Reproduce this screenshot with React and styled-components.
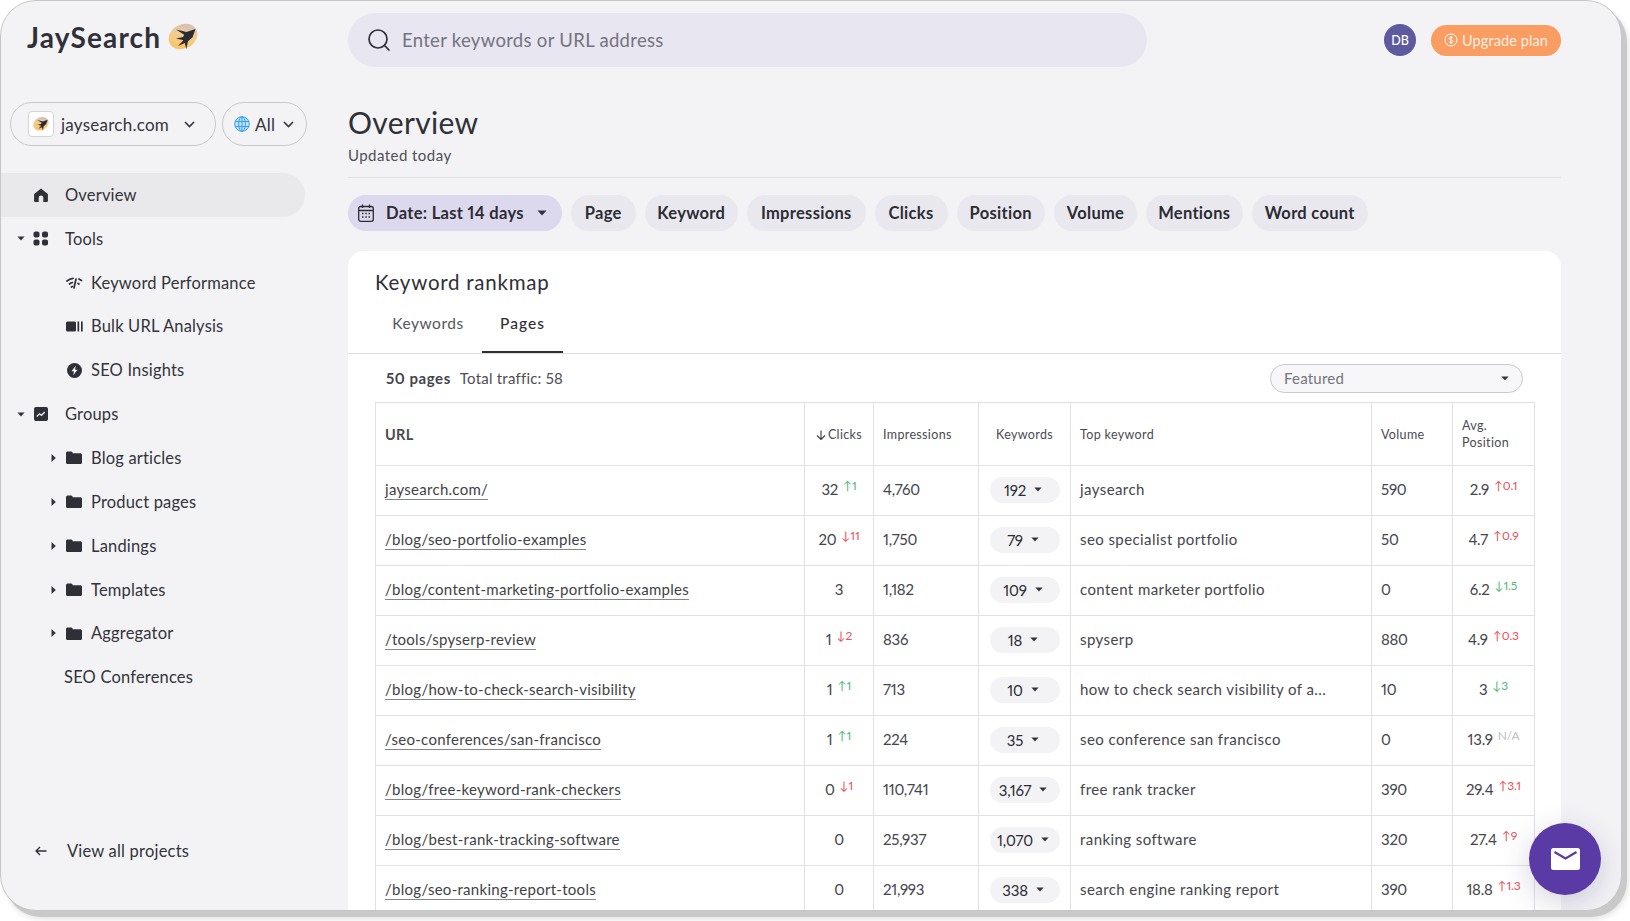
import React from "react";
import styled, { createGlobalStyle } from "styled-components";

const Global = createGlobalStyle`
  html, body { margin: 0; padding: 0; background: #fff; height: 100%; overflow: hidden; }
  body { font-family: "Lato", "Liberation Sans", sans-serif; color: #2f2f37; font-variant-numeric: proportional-nums; }
  * { box-sizing: border-box; }
`;

const Shell = styled.div`
  position: relative; width: 1622px; height: 911px; margin: 0;
  border: 1.5px solid #c6c6c8; border-radius: 36px; background: #f3f3f6;
  box-shadow: 5px 6px 0 #c9c9c9, 6px 8px 6px rgba(0,0,0,.12);
  display: grid; grid-template-columns: 347px 1fr; overflow: hidden;
`;
const Sidebar = styled.aside`display: flex; flex-direction: column; padding-top: 21px; min-height: 0;`;
const Logo = styled.div`display: flex; align-items: center; gap: 7px; padding-left: 26px; height: 30px;
  font-size: 28px; font-weight: 700; letter-spacing: 1.15px; color: #303038;`;
const SiteRow = styled.div`display: flex; gap: 6px; padding: 50px 0 0 9px; margin-bottom: 27px;`;
const SitePill = styled.div`height: 44px; width: ${p => p.$w}px; border: 1px solid #c9c9cc; border-radius: 22px;
  display: flex; align-items: center; padding-left: ${p => p.$pl}px; font-size: 17px; letter-spacing: .25px; color: #34343c;`;
const SiteIcon = styled.span`width: 26px; height: 26px; border: 1px solid #d4d4d8; border-radius: 4px; background: #fff;
  display: flex; align-items: center; justify-content: center; margin-right: 7px;`;
const ChevSlot = styled.span`display: flex; margin: 0 0 0 ${p => p.$ml}px;`;
const AllLabel = styled.span`margin: 0 0 0 5px;`;
const Nav = styled.nav`display: flex; flex-direction: column;`;
const NavRow = styled.div`height: 43.85px; width: 304px; display: flex; align-items: center; padding-left: ${p => p.$pl}px;
  font-size: 16.5px; letter-spacing: .18px; color: #33333b;
  ${p => p.$active && "background: #e9e9ec; border-radius: 0 22px 22px 0;"}`;
const Caret = styled.span`width: 12px; height: 12px; flex: none; display: flex; align-items: center; justify-content: center;`;
const NavIcon = styled.span`flex: none; width: 18px; margin-left: ${p => p.$ml}px; margin-right: ${p => p.$mr}px; display: flex; align-items: center; justify-content: center;`;
const Footer = styled.div`margin-top: auto; height: 44px; margin-bottom: 37px; display: flex; align-items: center; padding-left: 34px; gap: 20px;
  font-size: 16.5px; letter-spacing: .2px; color: #33333b;`;

const Main = styled.main`min-width: 0; padding: 12px 60px 0 0; display: flex; flex-direction: column; min-height: 0;`;
const TopBar = styled.div`display: flex; align-items: center; height: 54px; flex: none;`;
const Search = styled.div`width: 799px; height: 54px; border-radius: 27px; background: #e8e6f0; display: flex; align-items: center; padding-left: 18px; gap: 10px;
  font-size: 18.5px; letter-spacing: .3px; color: #74747e;`;
const Avatar = styled.div`margin-left: auto; width: 32px; height: 32px; border-radius: 50%; background: #5d5a9f; color: #fff; font-size: 12.5px; font-weight: 500;
  display: flex; align-items: center; justify-content: center; margin-right: 15px;`;
const Upgrade = styled.div`width: 130px; height: 31px; border-radius: 16px; background: #f99d63; color: #ffefe4; font-size: 14.5px; font-weight: 400; letter-spacing: .1px;
  display: flex; align-items: center; justify-content: center; gap: 4px;`;
const Heading = styled.h1`margin: 37px 0 0; font-size: 30px; font-weight: 400; letter-spacing: .35px; line-height: 36px; color: #303038;`;
const Sub = styled.div`margin-top: 5px; font-size: 15px; letter-spacing: .45px; line-height: 20px; color: #4e4e56; padding-bottom: 12px; border-bottom: 1px solid #e0e0e3;`;
const Chips = styled.div`display: flex; gap: 9px; margin: 17px 0 20px; flex: none;`;
const Chip = styled.div`height: 36px; width: ${p => p.$w}px; border-radius: 18px; background: #e9e8ef; display: flex; align-items: center; justify-content: center;
  font-size: 16.5px; font-weight: 700; letter-spacing: .3px; color: #2c2c34;`;
const DateChip = styled(Chip)`background: #dcd8ee; justify-content: flex-start; padding: 0 10px; gap: 12px; letter-spacing: .32px;`;
const ChipCaret = styled.span`display: flex; margin-left: auto; margin-right: 5px;`;
const Card = styled.section`flex: 1; min-height: 0; background: #fff; border-radius: 16px 16px 0 0; overflow: hidden;`;
const CardTitle = styled.h2`margin: 0; padding: 17px 0 0 27px; font-size: 20.5px; font-weight: 400; letter-spacing: .75px; line-height: 28px; color: #303038;`;
const Tabs = styled.div`display: flex; height: 51px; margin-top: 7px; padding-left: 36px; border-bottom: 1.5px solid #dedee0;`;
const Tab = styled.div`width: ${p => p.$w}px; margin-right: ${p => p.$mr}px; height: 50px; padding-top: 8px; display: flex; justify-content: center; font-size: 15.5px; letter-spacing: ${p => p.$on ? "1px" : ".55px"}; line-height: 24px;
  color: ${p => p.$on ? "#2f2f37" : "#55555d"}; ${p => p.$on && "font-weight: 500; border-bottom: 2px solid #2f2f37;"}`;
const Summary = styled.div`height: 48px; display: flex; align-items: center; padding: 0 38px 0 38px; font-size: 15px; letter-spacing: .22px; color: #4e4e56; gap: 9px;`;
const Bold = styled.b`font-weight: 700; color: #44444c; letter-spacing: .55px;`;
const Select = styled.div`margin-left: auto; width: 253px; height: 29px; border: 1px solid #c9c9cc; border-radius: 15px; background: #f7f7f9; display: flex; align-items: center; padding: 0 13px; justify-content: space-between; color: #74747c;`;
const Table = styled.table`margin-left: 27px; width: 1159px; table-layout: fixed; border-collapse: collapse; font-size: 15px; letter-spacing: .42px; color: #45454d;`;
const Th = styled.th`border: 1.5px solid #e1e1e3; height: 63px; padding: 0 ${p => p.$c ? 0 : 9}px; font-size: 12.5px; font-weight: 400; letter-spacing: .35px; text-align: ${p => p.$c ? "center" : "left"}; color: #4a4a52; line-height: 17px;
  ${p => p.$strong && "font-size: 14.5px; font-weight: 700;"}`;
const Td = styled.td`border: 1.5px solid #e1e1e3; height: 50px; padding: 0 ${p => p.$c ? 0 : 9}px 3px; text-align: ${p => p.$c ? "center" : "left"}; white-space: nowrap; overflow: hidden;
  ${p => p.$num && "letter-spacing: -.25px;"}`;
const UrlLink = styled.a`color: #3f3f47; border-bottom: 1px solid #85858c; padding-bottom: 1px; letter-spacing: .28px;`;
const Delta = styled.sup`font-size: 12px; line-height: 0; margin-left: 5px; vertical-align: 5px; letter-spacing: -.1px; color: ${p => p.$c};`;
const KwChip = styled.span`display: inline-flex; align-items: center; justify-content: center; gap: 8px; width: 70px; height: 26px; padding-right: 3px; margin-top: 1px; border-radius: 13px; background: #f3f3f5; color: #2c2c34; letter-spacing: -.2px;`;
const Fab = styled.div`position: absolute; left: 1528px; top: 822px; width: 72px; height: 72px; border-radius: 50%; background: #5a3ba5;
  display: flex; align-items: center; justify-content: center; box-shadow: 0 8px 30px rgba(50,40,90,.2);`;

const Down = ({ s = 8, c = "#33333b" }) => <svg width={s} height={s * .6} viewBox="0 0 10 6"><path d="M0.5 0.5h9L5 5.5z" fill={c} /></svg>;
const Right = () => <svg width="5" height="8" viewBox="0 0 5 8"><path d="M.5 0v8L4.8 4z" fill="#33333b" /></svg>;
const Chev = () => <svg width="11" height="7" viewBox="0 0 11 7"><path d="M1 1l4.5 4.5L10 1" fill="none" stroke="#33333b" strokeWidth="1.6" /></svg>;
const Bird = ({ s = 30, id }) => (
  <svg width={s} height={s} viewBox="0 0 30 30">
    <defs><linearGradient id={id} x1="0" y1="1" x2="1" y2="0"><stop offset="0" stopColor="#fcc04f" /><stop offset=".55" stopColor="#f2cd92" /><stop offset="1" stopColor="#c4b8cf" /></linearGradient></defs>
    <ellipse cx="15" cy="14.500" rx="15" ry="12" transform="rotate(-28 15 14.500)" fill={`url(#${id})`} />
    <path d="M8 7.500l10.500 2.600L27.500 7l-3 8.500-4.500 3.700-1.700 7.800-1.500-6-6.800 3 5.400-5.700L8 16.500l7-1.400 1.200-2.300z" fill="#2b2b33" />
  </svg>
);
const Home = () => <svg width="16" height="16" viewBox="0 0 16 16"><path d="M8 1.500l6.500 5.200a1 1 0 0 1 .4.8V14a1 1 0 0 1-1 1H10.300v-4.200a2.300 2.300 0 0 0-4.600 0V15H2.100a1 1 0 0 1-1-1V7.500a1 1 0 0 1 .4-.8z" fill="#2f2f37" /></svg>;
const Grid4 = () => <svg width="16" height="15" viewBox="0 0 16 15" fill="#2f2f37"><rect x="0.500" y="0.500" width="6" height="6" rx="2" /><rect x="9" y="0.500" width="6" height="6" rx="2" /><rect x="0.500" y="8.500" width="6" height="6" rx="2" /><rect x="9" y="8.500" width="6" height="6" rx="2" /></svg>;
const Perf = () => <svg width="17" height="12" viewBox="0 0 17 12" fill="none" stroke="#2f2f37" strokeLinecap="round"><path strokeWidth="1.700" d="M1 4c1.800-1.500 3.800-2.300 6-2.600M3.500 7c1-.9 2-1.300 3-1.500M5.500 10l.8-.6M8 11l2-9" /><path strokeWidth="1.700" d="M13 2l2.500 1.500M12 6.500l1 .6" /></svg>;
const Bulk = () => <svg width="17" height="11" viewBox="0 0 17 11" fill="#2f2f37"><rect width="10" height="10" y=".5" rx="1.500" /><rect x="11.500" y=".5" width="1.700" height="10" /><rect x="15" y=".5" width="1.700" height="10" /></svg>;
const BoltC = () => <svg width="15" height="15" viewBox="0 0 15 15"><circle cx="7.500" cy="7.500" r="7.500" fill="#2f2f37" /><path d="M8.800 2.800L4.500 8.300h2.500L6.200 12.200l4.300-5.500H8z" fill="#f3f3f6" /></svg>;
const Chart = () => <svg width="14" height="14" viewBox="0 0 14 14"><rect width="14" height="14" rx="2" fill="#2f2f37" /><path d="M2.800 9.500l2.700-2.700 2 1.500 3.200-3.300" stroke="#f3f3f6" strokeWidth="1.300" fill="none" /></svg>;
const Folder = () => <svg width="16" height="13" viewBox="0 0 16 13"><path d="M0 2a1.500 1.500 0 0 1 1.500-1.500h4L7.200 2.300h7.300A1.500 1.500 0 0 1 16 3.800v7.700A1.500 1.500 0 0 1 14.500 13h-13A1.500 1.500 0 0 1 0 11.500z" fill="#2f2f37" /></svg>;
const Globe = () => <svg width="16" height="16" viewBox="0 0 16 16" fill="none" stroke="#3aa0e8" strokeWidth="1"><circle cx="8" cy="8" r="7.300" fill="#bfe2fa" /><ellipse cx="8" cy="8" rx="3.400" ry="7.300" /><path d="M1 5.500h14M1 10.500h14M8 .7v14.600" /></svg>;
const SearchI = () => <svg width="26" height="26" viewBox="0 0 26 26" fill="none" stroke="#2f2f37" strokeWidth="1.700" strokeLinecap="round"><circle cx="12" cy="12" r="9" /><path d="M18.500 18.500l4.500 4.500" /></svg>;
const Cal = () => <svg width="16" height="18" viewBox="0 0 16 18" fill="none" stroke="#2c2c34" strokeWidth="1.300"><rect x=".7" y="2.500" width="14.600" height="14.800" rx="2" /><path d="M.7 6.500h14.600M4.500.5v3.500M11.500.5v3.500" /><path d="M4 9.500h1.500M7.300 9.500h1.500M10.500 9.500H12M4 13h1.500M7.300 13h1.500M10.500 13H12" strokeWidth="1.400" /></svg>;
const Coin = () => <svg width="14" height="14" viewBox="0 0 14 14" fill="none" stroke="#fff" strokeWidth="1"><circle cx="7" cy="7" r="6" /><path d="M9 5.200C8.600 4.500 7.800 4.200 7 4.200c-1.100 0-2 .6-2 1.400 0 1.900 4 .9 4 2.800 0 .8-.9 1.400-2 1.400-.9 0-1.700-.4-2.100-1.100M7 3.200v7.600" /></svg>;
const Back = () => <svg width="12" height="10" viewBox="0 0 12 10" fill="none" stroke="#2f2f37" strokeWidth="1.300"><path d="M11.500 5H1M5 1L1 5l4 4" /></svg>;
const Mail = () => <svg width="29" height="22" viewBox="0 0 29 22"><rect width="29" height="22" rx="2.500" fill="#fff" /><path d="M3.500 4L14.500 10.500 25.500 4" fill="none" stroke="#5a3ba5" strokeWidth="2.200" /></svg>;
const SortIcon = styled.svg`margin-right: 2px; vertical-align: -1px;`;
const SortDown = () => <SortIcon width="10" height="10" viewBox="0 0 10 10" fill="none" stroke="#3a3a42" strokeWidth="1.100"><path d="M5 .5v9M1 5.500l4 4 4-4" /></SortIcon>;

const red = "#e8505b", green = "#4fb878", grey = "#c0c0c4";
const rows = [
  ["jaysearch.com/", "32", "↑1", green, "4,760", "192", "jaysearch", "590", "2.9", "↑0.1", red],
  ["/blog/seo-portfolio-examples", "20", "↓11", red, "1,750", "79", "seo specialist portfolio", "50", "4.7", "↑0.9", red],
  ["/blog/content-marketing-portfolio-examples", "3", "", "", "1,182", "109", "content marketer portfolio", "0", "6.2", "↓1.5", green],
  ["/tools/spyserp-review", "1", "↓2", red, "836", "18", "spyserp", "880", "4.9", "↑0.3", red],
  ["/blog/how-to-check-search-visibility", "1", "↑1", green, "713", "10", "how to check search visibility of a...", "10", "3", "↓3", green],
  ["/seo-conferences/san-francisco", "1", "↑1", green, "224", "35", "seo conference san francisco", "0", "13.9", "N/A", grey],
  ["/blog/free-keyword-rank-checkers", "0", "↓1", red, "110,741", "3,167", "free rank tracker", "390", "29.4", "↑3.1", red],
  ["/blog/best-rank-tracking-software", "0", "", "", "25,937", "1,070", "ranking software", "320", "27.4", "↑9", red],
  ["/blog/seo-ranking-report-tools", "0", "", "", "21,993", "338", "search engine ranking report", "390", "18.8", "↑1.3", red],
];
const widths = [429, 69, 105, 92, 301, 81, 82];
const chips = [["Page", 64.5], ["Keyword", 93.5], ["Impressions", 118.5], ["Clicks", 73], ["Position", 88.5], ["Volume", 83], ["Mentions", 96.5], ["Word count", 116.5]];
const nav = [
  { t: "Overview", pl: 14, ic: <Home />, on: true },
  { t: "Tools", pl: 14, car: <Down />, ic: <Grid4 /> },
  { t: "Keyword Performance", pl: 46, ic: <Perf />, sub: 1 },
  { t: "Bulk URL Analysis", pl: 46, ic: <Bulk />, sub: 1 },
  { t: "SEO Insights", pl: 46, ic: <BoltC />, sub: 1 },
  { t: "Groups", pl: 14, car: <Down />, ic: <Chart /> },
  { t: "Blog articles", pl: 46, car: <Right />, ic: <Folder />, sub: 1 },
  { t: "Product pages", pl: 46, car: <Right />, ic: <Folder />, sub: 1 },
  { t: "Landings", pl: 46, car: <Right />, ic: <Folder />, sub: 1 },
  { t: "Templates", pl: 46, car: <Right />, ic: <Folder />, sub: 1 },
  { t: "Aggregator", pl: 46, car: <Right />, ic: <Folder />, sub: 1 },
  { t: "SEO Conferences", pl: 63 },
];

export default function App() {
  return (
    <>
      <Global />
      <Shell>
        <Sidebar>
          <Logo>JaySearch <Bird id="lg1" /></Logo>
          <SiteRow>
            <SitePill $w={206} $pl={17}><SiteIcon><Bird s={16} id="lg2" /></SiteIcon>jaysearch.com<ChevSlot $ml={15}><Chev /></ChevSlot></SitePill>
            <SitePill $w={85} $pl={11}><Globe /><AllLabel>All</AllLabel><ChevSlot $ml={8}><Chev /></ChevSlot></SitePill>
          </SiteRow>
          <Nav>
            {nav.map(n => (
              <NavRow key={n.t} $pl={n.pl} $active={n.on}>
                {n.ic && <Caret>{n.car}</Caret>}
                {n.ic && <NavIcon $ml={n.sub ? 6 : 5} $mr={n.sub ? 8 : 15}>{n.ic}</NavIcon>}
                {n.t}
              </NavRow>
            ))}
          </Nav>
          <Footer><Back />View all projects</Footer>
        </Sidebar>
        <Main>
          <TopBar>
            <Search><SearchI />Enter keywords or URL address</Search>
            <Avatar>DB</Avatar>
            <Upgrade><Coin />Upgrade plan</Upgrade>
          </TopBar>
          <Heading>Overview</Heading>
          <Sub>Updated today</Sub>
          <Chips>
            <DateChip $w={214}><Cal />Date: Last 14 days<ChipCaret><Down s={10} /></ChipCaret></DateChip>
            {chips.map(([t, w]) => <Chip key={t} $w={w}>{t}</Chip>)}
          </Chips>
          <Card>
            <CardTitle>Keyword rankmap</CardTitle>
            <Tabs>
              <Tab $w={88} $mr={10}>Keywords</Tab>
              <Tab $w={81} $mr={0} $on>Pages</Tab>
            </Tabs>
            <Summary><Bold>50 pages</Bold>Total traffic: 58
              <Select>Featured<Down /></Select>
            </Summary>
            <Table>
              <colgroup>{widths.map((w, i) => <col key={i} width={w} />)}</colgroup>
              <thead>
                <tr>
                  <Th $strong>URL</Th>
                  <Th $c><SortDown />Clicks</Th>
                  <Th>Impressions</Th>
                  <Th $c>Keywords</Th>
                  <Th>Top keyword</Th>
                  <Th>Volume</Th>
                  <Th>Avg.<br />Position</Th>
                </tr>
              </thead>
              <tbody>
                {rows.map(r => (
                  <tr key={r[0]}>
                    <Td><UrlLink>{r[0]}</UrlLink></Td>
                    <Td $c $num>{r[1]}{r[2] && <Delta $c={r[3]}>{r[2]}</Delta>}</Td>
                    <Td $num>{r[4]}</Td>
                    <Td $c><KwChip>{r[5]}<Down s={8} /></KwChip></Td>
                    <Td>{r[6]}</Td>
                    <Td $num>{r[7]}</Td>
                    <Td $c $num>{r[8]}<Delta $c={r[10]}>{r[9]}</Delta></Td>
                  </tr>
                ))}
              </tbody>
            </Table>
          </Card>
        </Main>
        <Fab><Mail /></Fab>
      </Shell>
    </>
  );
}
